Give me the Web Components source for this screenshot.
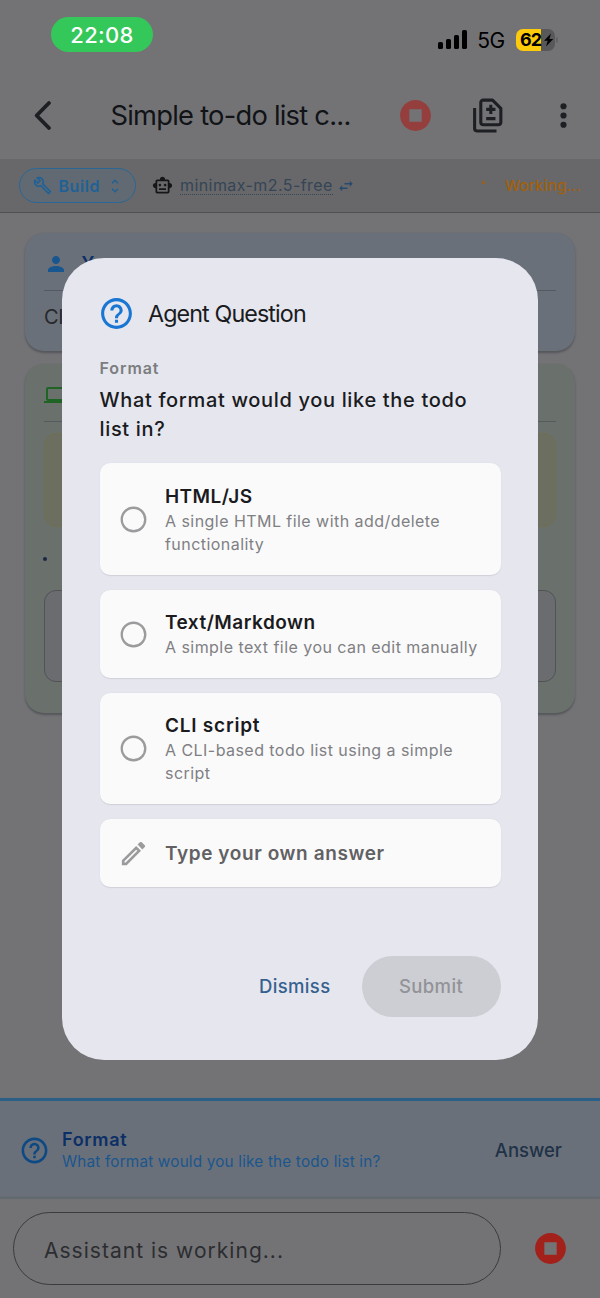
<!DOCTYPE html>
<html lang="en">
<head>
<meta charset="utf-8">
<title>Agent Question</title>
<style>
  body {
    margin: 0;
    width: 600px;
    height: 1298px;
    overflow: hidden;
    font-family: Inter, "Liberation Sans", sans-serif;
    background: #737376;
  }
</style>
</head>
<body>
<chat-screen>
  <status-bar slot="top"></status-bar>
  <app-bar slot="top">Simple to-do list c...</app-bar>
  <agent-bar slot="top" model="minimax-m2.5-free" state="Working...">Build</agent-bar>

  <message-card icon="person" label="Y" style="--card:#6a7079;--accent:#17568f;--title:#0b2f66;height:118px">
    <chat-text>Cl</chat-text>
  </message-card>
  <message-card icon="computer" style="--card:#6a706b;--accent:#1f6325;height:349px">
    <tool-output></tool-output>
  </message-card>

  <question-bar slot="bottom" heading="Format" action="Answer">What format would you like the todo list in?</question-bar>
  <input-bar slot="bottom">Assistant is working...</input-bar>

  <question-dialog slot="dialog" heading="Agent Question" topic="Format">
    What format would you like the todo list in?
    <answer-option slot="options" heading="HTML/JS" style="--ls:.44px;height:112px">A single HTML file with add/delete functionality</answer-option>
    <answer-option slot="options" heading="Text/Markdown" style="--ls:.48px;height:88px">A simple text file you can edit manually</answer-option>
    <answer-option slot="options" heading="CLI script" style="--ls:.77px;height:111px">A CLI-based todo list using a simple script</answer-option>
    <answer-option slot="options" heading="Type your own answer" custom style="--ls:.59px;height:68px"></answer-option>
    <pill-button slot="actions">Dismiss</pill-button>
    <pill-button slot="actions" disabled>Submit</pill-button>
  </question-dialog>
</chat-screen>

<script>
const icons = {
  help: '<path d="M11 18h2v-2h-2v2zm1-16C6.48 2 2 6.48 2 12s4.48 10 10 10 10-4.48 10-10S17.52 2 12 2zm0 18c-4.41 0-8-3.59-8-8s3.59-8 8-8 8 3.59 8 8-3.59 8-8 8zm0-14c-2.21 0-4 1.79-4 4h2c0-1.1.9-2 2-2s2 .9 2 2c0 2-3 1.75-3 5h2c0-2.25 3-2.5 3-5 0-2.21-1.79-4-4-4z"/>',
  stop: '<path d="M12 2C6.48 2 2 6.48 2 12s4.48 10 10 10 10-4.48 10-10S17.52 2 12 2zm4 14H8V8h8v8z"/>',
  back: '<path d="M16.2 3.9 8.2 12l8 8.1" fill="none" stroke="currentColor" stroke-width="2.5" stroke-linecap="round" stroke-linejoin="round"/>',
  diff: '<path d="M3 7.2V20.5c0 .9.6 1.5 1.5 1.5H17.2M8.5 2H14.6L20 7.4V16.5c0 .8-.7 1.5-1.5 1.5H8.5C7.7 18 7 17.3 7 16.5V3.5C7 2.7 7.7 2 8.5 2zM13.5 5v6M10.5 8h6M10.5 14h6" fill="none" stroke="currentColor" stroke-width="2" stroke-linejoin="round"/>',
  more: '<circle cx="12" cy="6" r="2"/><circle cx="12" cy="12" r="2"/><circle cx="12" cy="18" r="2"/>',
  wrench: '<path d="M22.61 18.99l-9.08-9.08c.93-2.34.45-5.1-1.44-7C9.79.61 6.21.4 3.66 2.26L7.5 6.11 6.08 7.52 2.25 3.69C.39 6.23.6 9.82 2.9 12.11c1.86 1.86 4.57 2.35 6.89 1.48l9.11 9.11c.39.39 1.02.39 1.41 0l2.3-2.3c.4-.38.4-1.01 0-1.41zm-3 1.6l-9.46-9.46c-.61.45-1.29.72-2 .82-1.36.2-2.79-.21-3.83-1.25C3.37 9.76 2.93 8.5 3 7.26l3.09 3.09 4.24-4.24-3.09-3.09c1.24-.07 2.49.37 3.44 1.31 1.08 1.08 1.49 2.57 1.24 3.96-.12.71-.42 1.37-.88 1.96l9.45 9.45-.88.89z"/>',
  unfold: '<path d="M12 5.83L15.17 9l1.41-1.41L12 3 7.41 7.59 8.83 9 12 5.83zm0 12.34L8.83 15l-1.41 1.41L12 21l4.59-4.59L15.17 15 12 18.17z"/>',
  robot: '<path d="M20 9V7c0-1.1-.9-2-2-2h-3c0-1.66-1.34-3-3-3S9 3.34 9 5H6c-1.1 0-2 .9-2 2v2c-1.66 0-3 1.34-3 3s1.34 3 3 3v4c0 1.1.9 2 2 2h12c1.1 0 2-.9 2-2v-4c1.66 0 3-1.34 3-3s-1.34-3-3-3zm-2 10H6V7h12v12zm-9-6c-.83 0-1.5-.67-1.5-1.5S8.17 10 9 10s1.5.67 1.5 1.5S9.83 13 9 13zm7.5-1.5c0 .83-.67 1.5-1.5 1.5s-1.5-.67-1.5-1.5.67-1.5 1.5-1.5 1.5.67 1.5 1.5zM8 15h8v2H8v-2z"/>',
  swap: '<path d="M6.99 11L3 15l3.99 4v-3H14v-2H6.99v-3zM21 9l-3.99-4v3H10v2h7.01v3L21 9z"/>',
  person: '<path d="M12 12c2.21 0 4-1.79 4-4s-1.79-4-4-4-4 1.79-4 4 1.79 4 4 4zm0 2c-2.67 0-8 1.34-8 4v2h16v-2c0-2.66-5.33-4-8-4z"/>',
  computer: '<path d="M20 18c1.1 0 1.99-.9 1.99-2L22 6c0-1.1-.9-2-2-2H4c-1.1 0-2 .9-2 2v10c0 1.1.9 2 2 2H0v2h24v-2h-4zM4 6h16v10H4V6z"/>',
  radio: '<circle cx="12" cy="12" r="9.1" fill="none" stroke="currentColor" stroke-width="1.8"/>',
  edit: '<path d="M14.06 9.02l.92.92L5.92 19H5v-.92l9.06-9.06M17.66 3c-.25 0-.51.1-.7.29l-1.83 1.83 3.75 3.75 1.83-1.83c.39-.39.39-1.02 0-1.41l-2.34-2.34c-.2-.2-.45-.29-.71-.29zm-3.6 3.19L3 17.25V21h3.75L17.81 9.94l-3.75-3.75z"/>'
}

// attaches an open shadow root filled from a template string
class Base extends HTMLElement {
  constructor() {
    super()
    this.attachShadow({ mode: "open" })
  }
  connectedCallback() {
    const template = document.createElement("template")
    template.innerHTML = this.render()
    this.shadowRoot.replaceChildren(template.content.cloneNode(true))
  }
  attr(name) {
    return this.getAttribute(name) || ""
  }
}

customElements.define("ui-icon", class extends Base {
  render() {
    const size = this.attr("size")
    return `
<style>
:host{ display: block; flex: none; width: ${size}px; height: ${size}px; }
svg{ display: block; width: 100%; height: 100%; overflow: visible; }
</style>
<svg viewBox="0 0 24 24" fill="currentColor">${icons[this.attr("name")]}</svg>`
  }
})

customElements.define("chat-screen", class extends Base {
  render() {
    return `
<style>
:host{ display: flex; flex-direction: column; position: relative; width: 600px; height: 1298px; }
main{ flex: 1; display: flex; flex-direction: column; gap: 13px; padding: 20px 25px 0; }
.dialog{ position: absolute; left: 62px; top: 258px; }
</style>
<slot name="top"></slot>
<main><slot></slot></main>
<slot name="bottom"></slot>
<div class="dialog"><slot name="dialog"></slot></div>`
  }
})

customElements.define("status-bar", class extends Base {
  render() {
    return `
<style>
:host{ display: flex; align-items: flex-start; justify-content: space-between; height: 72px; padding: 17px 42px 0 51px; box-sizing: border-box; }
.time{ width: 102px; height: 35px; border-radius: 18px; background: #34c759; color: #fff; font: 500 22px/36px Inter; letter-spacing: .3px; text-align: center; }
.right{ display: flex; align-items: center; height: 26px; margin-top: 10px; color: #000; }
.bars{ display: flex; align-items: flex-end; gap: 3.2px; height: 19px; margin-top: -1px; }
.bars i{ width: 5px; border-radius: 1.6px; background: #000; }
.net{ margin: 2px 11px 0 10px; font: 400 21px/26px Inter; letter-spacing: -.3px; }
.battery{ display: flex; align-items: center; width: 39px; height: 22px; border-radius: 7px; background: linear-gradient(90deg, #fecb0a 25px, #58585a 25px); }
.level{ width: 23px; margin-left: 4px; font: 700 18px/22px Inter; letter-spacing: -1px; }
.battery svg{ width: 11px; height: 14px; }
.tip{ width: 2px; height: 6px; margin-left: 1px; border-radius: 0 2px 2px 0; background: #626265; }
</style>
<div class="time">22:08</div>
<div class="right">
  <div class="bars"><i style="height:7px"></i><i style="height:10.5px"></i><i style="height:14.5px"></i><i style="height:19px"></i></div>
  <div class="net">5G</div>
  <div class="battery"><span class="level">62</span><svg viewBox="0 0 11 14"><path d="M8 .5 1 7.8h3.7L3 13.5 10.2 6H6.4z"/></svg></div>
  <div class="tip"></div>
</div>`
  }
})

customElements.define("app-bar", class extends Base {
  render() {
    return `
<style>
:host{ display: flex; align-items: center; height: 87px; padding: 0 18px 0 24px; box-sizing: border-box; color: #1d1f22; }
.title{ width: 262px; margin-left: 49.5px; font: 400 27.3px/40px Inter; letter-spacing: -.76px; color: #111316; white-space: nowrap; }
.stop{ color: #943f3e; margin: 0 36.5px 0 24px; }
.more{ margin-left: 37.5px; }
</style>
<ui-icon name="back" size="37"></ui-icon>
<div class="title"><slot></slot></div>
<ui-icon class="stop" name="stop" size="37"></ui-icon>
<ui-icon name="diff" size="37"></ui-icon>
<ui-icon class="more" name="more" size="37"></ui-icon>`
  }
})

customElements.define("agent-bar", class extends Base {
  render() {
    return `
<style>
:host{ display: flex; align-items: center; height: 54px; padding: 0 19px 0; box-sizing: border-box; background: #68686a; border-bottom: 1px solid #505053; }
.mode{ display: flex; align-items: center; width: 117px; height: 35px; padding-left: 12.5px; box-sizing: border-box; border: 1.5px solid #2a6797; border-radius: 18px; background: #616a72; color: #1f6196; font: 600 16px/20px Inter; letter-spacing: .57px; }
.mode span{ margin: 0 4px 0 7px; width: 43px; }
.robot{ margin: 0 7px 0 16px; color: #151618; }
.model{ margin-top: 1px; font: 400 16px/17px Inter; letter-spacing: .42px; color: #344556; border-bottom: 1.5px dotted #344556; }
.swap{ margin-left: 4px; color: #264a6e; }
.dot{ width: 3px; height: 3px; margin: 0 20px 6px auto; border-radius: 50%; background: #a2600a; }
.state{ font: 500 15px/20px Inter; letter-spacing: .26px; color: #a2600a; }
</style>
<div class="mode"><ui-icon name="wrench" size="19"></ui-icon><span><slot></slot></span><ui-icon name="unfold" size="18"></ui-icon></div>
<ui-icon class="robot" name="robot" size="21"></ui-icon>
<div class="model">${this.attr("model")}</div>
<ui-icon class="swap" name="swap" size="18"></ui-icon>
<i class="dot"></i>
<div class="state">${this.attr("state")}</div>`
  }
})

customElements.define("message-card", class extends Base {
  render() {
    return `
<style>
:host{ display: block; box-sizing: border-box; padding: 0 19px; border-radius: 19px; background: var(--card); box-shadow: 0 1.5px 2px rgba(40,45,50,.4); }
header{ display: flex; align-items: center; gap: 14px; height: 58px; padding-top: 5px; box-sizing: border-box; color: var(--accent); border-bottom: 1px solid #555a5e; }
header ui-icon{ margin-left: -.5px; }
b{ color: var(--title); font: 600 18px/22px Inter; }
</style>
<header><ui-icon name="${this.attr("icon")}" size="24"></ui-icon><b>${this.attr("label")}</b></header>
<slot></slot>`
  }
})

customElements.define("chat-text", class extends Base {
  render() {
    return `
<style>
:host{ display: block; padding-top: 13px; font: 400 20px/26px Inter; color: #26282b; }
</style>
<slot></slot>`
  }
})

customElements.define("tool-output", class extends Base {
  render() {
    return `
<style>
:host{ display: flex; flex-direction: column; }
div{ box-sizing: border-box; }
.thinking{ height: 94px; margin-top: 11px; border: 1.5px solid #6f7053; border-radius: 12px; background: #6c6e5f; }
.dot{ width: 4px; height: 4px; margin: 30px 0 29px -1.5px; border-radius: 50%; background: #1d2547; }
.call{ height: 92px; border: 1.5px solid #515356; border-radius: 12px; background: #6b6c6f; }
</style>
<div class="thinking"></div>
<div class="dot"></div>
<div class="call"></div>`
  }
})

customElements.define("question-bar", class extends Base {
  render() {
    return `
<style>
:host{ display: flex; align-items: center; height: 101px; padding: 0 38px 0 18.5px; box-sizing: border-box; border-top: 3px solid #2c5f86; background: linear-gradient(#6a7079 0 95px, #62696f 96px); }
.icon{ color: #0d4a85; }
.text{ flex: 1; margin-left: 12.5px; padding-top: 1px; }
.heading{ font: 600 18px/23px Inter; letter-spacing: .66px; color: #0b2f66; }
.body{ font: 400 15.3px/22px Inter; letter-spacing: .18px; color: #1a568e; }
.action{ font: 500 18.5px/24px Inter; letter-spacing: -.02px; color: #1f3247; }
</style>
<ui-icon class="icon" name="help" size="31"></ui-icon>
<div class="text"><div class="heading">${this.attr("heading")}</div><div class="body"><slot></slot></div></div>
<div class="action">${this.attr("action")}</div>`
  }
})

customElements.define("input-bar", class extends Base {
  render() {
    return `
<style>
:host{ display: flex; align-items: center; height: 99px; padding: 0 31px 0 13px; box-sizing: border-box; }
.field{ width: 488px; height: 73px; padding: 2px 0 0 30px; box-sizing: border-box; border: 1.5px solid #3a3b3e; border-radius: 37px; font: 400 21px/71px Inter; letter-spacing: 1.02px; color: #2c2d30; }
.stop{ margin-left: auto; color: #a3211b; }
</style>
<div class="field"><slot></slot></div>
<ui-icon class="stop" name="stop" size="37"></ui-icon>`
  }
})

customElements.define("question-dialog", class extends Base {
  render() {
    return `
<style>
:host{ display: flex; flex-direction: column; width: 476px; height: 802px; padding: 36px 37.5px 43px; box-sizing: border-box; border-radius: 42px; background: #e5e6ee; }
header{ display: flex; align-items: center; gap: 13px; height: 39px; color: #1976d2; }
header span{ font: 400 23.3px/34px Inter; letter-spacing: -.9px; color: #1a1b20; }
.icon{ margin-left: -1.5px; }
.topic{ margin-top: 24.5px; font: 600 16px/20px Inter; letter-spacing: .92px; color: #7c7d80; }
.question{ margin: 8px 0 19.5px; font: 500 20px/29px Inter; letter-spacing: .66px; color: #1a1b20; }
.options{ display: flex; flex-direction: column; gap: 15px; }
.actions{ display: flex; align-items: center; justify-content: flex-end; margin: auto -.5px 0 0; }
</style>
<header><ui-icon class="icon" name="help" size="37"></ui-icon><span>${this.attr("heading")}</span></header>
<div class="topic">${this.attr("topic")}</div>
<div class="question"><slot></slot></div>
<div class="options"><slot name="options"></slot></div>
<div class="actions"><slot name="actions"></slot></div>`
  }
})

customElements.define("answer-option", class extends Base {
  render() {
    const custom = this.hasAttribute("custom")
    return `
<style>
:host{ display: flex; align-items: center; gap: 16px; padding: 0 18px 0 18.5px; box-sizing: border-box; border-radius: 10px; background: #fafafb; box-shadow: 0 .5px 1px #d0d1d8; }
.icon{ color: #9b9b9d; }
.heading{ font: 600 19px/27px Inter; letter-spacing: var(--ls); color: ${custom ? "#616163" : "#1b1b1e"}; }
.body{ font: 400 16px/23px Inter; letter-spacing: .45px; color: #808083; }
</style>
<ui-icon class="icon" name="${custom ? "edit" : "radio"}" size="31"></ui-icon>
<div><div class="heading">${this.attr("heading")}</div><div class="body"><slot></slot></div></div>`
  }
})

customElements.define("pill-button", class extends Base {
  render() {
    const disabled = this.hasAttribute("disabled")
    return `
<style>
:host{ display: block; height: 61px; box-sizing: border-box; border-radius: 31px; font: 500 18.5px/61px Inter; letter-spacing: .36px; ${disabled ? "width: 139px; padding-left: 37px; background: #cdced3; color: #929398;" : "padding: 0 31.5px; color: #36618e;"} }
</style>
<slot></slot>`
  }
})
</script>
</body>
</html>
